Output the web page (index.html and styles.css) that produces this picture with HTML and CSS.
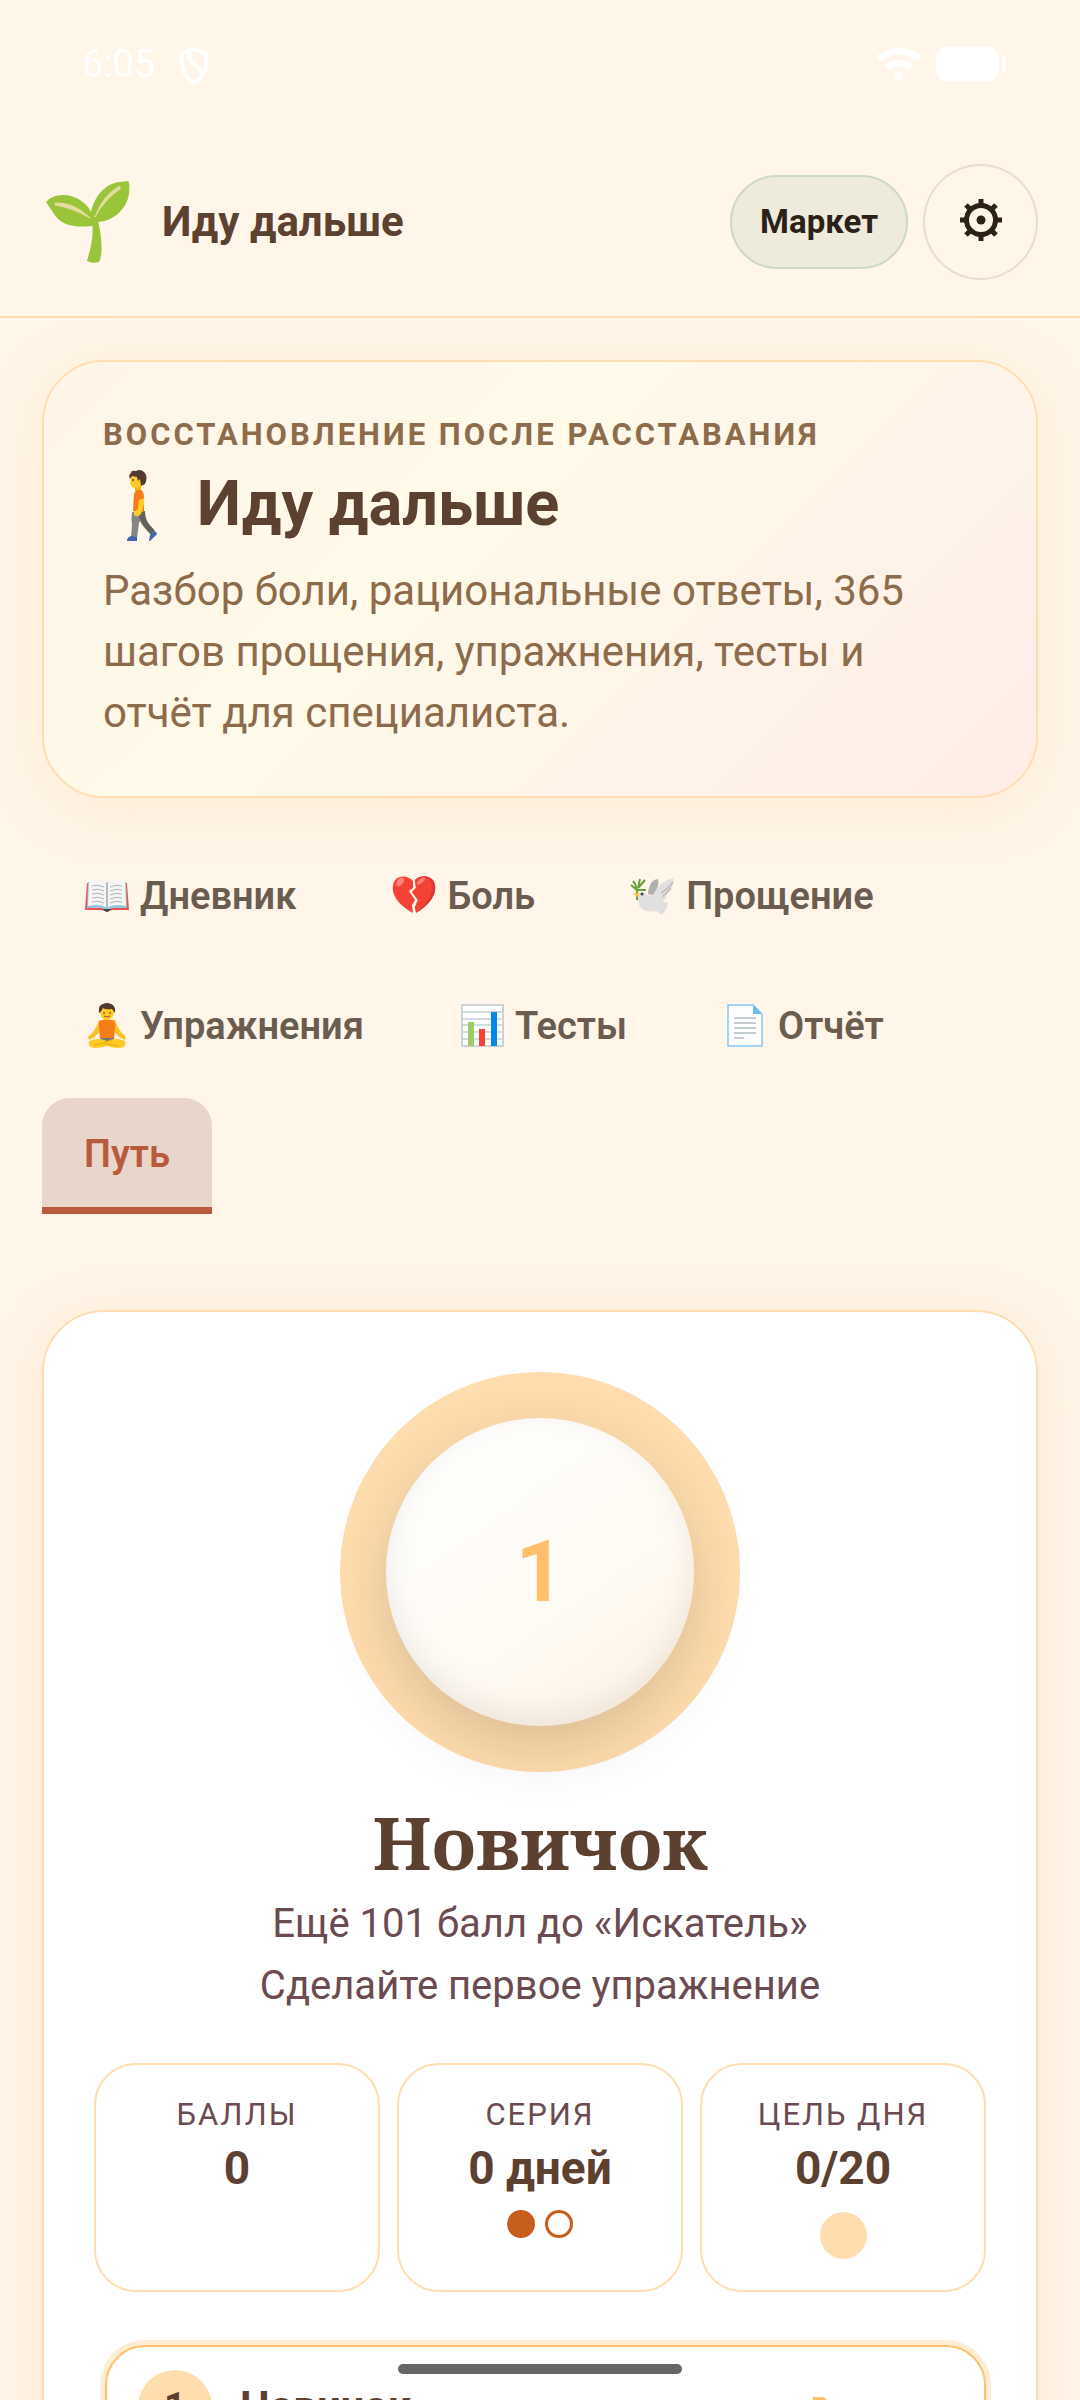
FILE: index.html
```
<!DOCTYPE html>
<html lang="ru">
<head>
    <meta charset="UTF-8">
    <meta name="viewport" content="width=device-width, initial-scale=1">
    <title>Иду дальше</title>
    <link rel="stylesheet" href="styles.css">
</head>
<body>
    <!-- Шапка со строкой состояния -->
    <header class="header">
        <div class="status-bar">
            <span class="clock">6:05</span>
            <svg class="status-shield" viewBox="0 0 30 38" fill="none" stroke="#fff" stroke-width="4" stroke-linejoin="round">
                <path d="M15 2 L27 6.500 C28.500 18 27 29 15 35.500 C3 29 1.500 18 3 6.500 Z"/>
                <path d="M10 4 C9 19 23 17 23 28"/>
            </svg>
            <span class="spacer"></span>
            <svg class="status-wifi" viewBox="0 0 44 36" fill="none" stroke="#fff" stroke-width="7" stroke-linecap="round">
                <path d="M4 11 Q22 -1 40 11"/>
                <path d="M12.500 20 Q22 14 31.500 20"/>
                <circle cx="22" cy="30" r="4" fill="#fff" stroke="none"/>
            </svg>
            <svg class="status-battery" viewBox="0 0 70 34" fill="#fff">
                <rect width="63" height="34" rx="11"/>
                <path d="M66 9 q4 0 4 4 v8 q0 4 -4 4z"/>
            </svg>
        </div>
        <div class="topbar">
            <svg class="logo" viewBox="0 0 84 82" aria-hidden="true">
                <path d="M46 40 C48 54 45 66 41 80 Q46 83 53 81 C57 74 56 56 52 40z" fill="#9ac43a"/>
                <path d="M46 45 C28 47 15 44 8 33 L0 21 Q6 14 17 14 C30 14 41 22 45 31 C49 14 60 2 74 1 L82 0 Q84 1 83 12 C82 26 68 41 51 41z" fill="#9ac43a"/>
                <path d="M9 22 Q28 21 44 37 Q27 27 9 24z M49 36 Q57 14 74 5 L74 8 Q58 19 49 36z" fill="#e6dc9c" stroke="#e6dc9c"/>
            </svg>
            <span class="brand">Иду дальше</span>
            <button type="button" class="btn-market">Маркет</button>
            <button type="button" class="btn-settings" aria-label="Настройки">
                <svg class="gear" viewBox="0 0 42 42" fill="none" stroke="#2c2117">
                    <circle cx="21" cy="21" r="14.500" stroke-width="5"/>
                    <circle cx="21" cy="21" r="4.500" fill="#2c2117" stroke="none"/>
                    <path stroke-width="5" d="M21 0V6M21 36V42M0 21H6M36 21H42M6 6L10 10M32 32L36 36M36 6L32 10M10 32L6 36"/>
                </svg>
            </button>
        </div>
    </header>

    <main class="content">
        <section class="hero">
            <p class="kicker">Восстановление после расставания</p>
            <h1 class="hero-title">
                <svg class="walker" viewBox="0 0 78 74" aria-hidden="true">
                    <path d="M29 45 Q28 52 29 58 L28 71 H34 L36 56 L41 46z" fill="#858585"/>
                    <path d="M36 45 Q36 55 41 60 L48 68 L52 64 L46 57 Q42 52 42 44z" fill="#616161"/>
                    <path d="M28 69 Q32 70 34 70 V74 H24 Q24 70 28 69z M47 68 Q51 66 51 64 L54 66 Q54 68 51 70 L47 74 H46z" fill="#3e65af"/>
                    <path d="M32 17 H38 V24 H32z" fill="#ffb300"/>
                    <path d="M31 27 Q33 22 38 23 Q41 24 41 31 L41 44 Q36 46 30 44z" fill="#f57c1b"/>
                    <path d="M36 33 L41 31 L41 37 L38 47 Q34 51 31 48 L31 45 L35 42z" fill="#ffca28"/>
                    <path d="M28 9 L38 10 L38 18 Q34 23 29 20 L27 16z" fill="#ffca28"/>
                    <path d="M27 12 Q25 8 28 6 Q28 3 33 4 Q38 1 42 6 Q45 11 42 17 L38 19 L37 12 L35 14 L34 10 L29 9z" fill="#543930"/>
                    <circle cx="30" cy="13" r="1" fill="#543930"/>
                </svg>
                Иду дальше
            </h1>
            <p class="hero-text">Разбор боли, рациональные ответы, 365 шагов прощения, упражнения, тесты и отчёт для специалиста.</p>
        </section>

        <!-- Вкладки -->
        <nav class="tabs">
            <button type="button" class="tab">
                <svg class="emoji" viewBox="0 0 46 46" aria-hidden="true">
                    <path d="M3 10 L1 37 H18 L23 39 L28 37 H45 L43 10z" fill="#ef5350"/>
                    <path d="M4 9 L3 35 H18 L23 38 L28 35 H43 L42 9z" fill="#8fc6da"/>
                    <path d="M5 8 Q17 5 23 10 Q29 5 41 8 L42 33 Q29 30 23 35 Q17 30 4 33z" fill="#f5f5f5"/>
                    <path d="M23 10 V35" stroke="#b0bec5" stroke-width="2"/>
                    <path d="M8 13 Q14 11 20 14 M8 17 Q14 15 20 18 M8 21 Q14 19 20 22 M8 25 Q14 23 20 26 M8 29 Q14 27 20 30 M26 14 Q32 11 38 13 M26 18 Q32 15 38 17 M26 22 Q32 19 38 21 M26 26 Q32 23 38 25 M26 30 Q32 27 38 29" fill="none" stroke="#b5b5b5"/>
                    <path d="M18 36 H28 L23 39z" fill="#37474f"/>
                </svg>
                Дневник
            </button>
            <button type="button" class="tab">
                <svg class="emoji" viewBox="0 0 46 46" aria-hidden="true">
                    <path d="M22 8 C16 1 4 2 2 12 C0 24 11 34 22 40 L21 32 L24 27 L18 18 L22 15z" fill="#f44336"/>
                    <path d="M24 7 C30 1 42 2 44 12 C46 24 35 34 25 40 L24 34 L27 27 L21 19 L25 15z" fill="#f44336"/>
                    <path d="M24 7 C30 1 42 2 44 12 C46 24 35 34 25 40 Q41 26 41 12 Q36 2 24 7z" fill="#d83a34"/>
                    <path d="M24 7 C30 2 40 3 41 13 C41 24 33 33 25 39 L24 34 L27 27 L21 19 L25 15z" fill="#f44336"/>
                    <ellipse cx="9" cy="9" rx="3" ry="5" transform="rotate(40 9 9)" fill="#ff847c"/>
                    <ellipse cx="30" cy="8" rx="2" ry="5" transform="rotate(50 30 8)" fill="#ff847c"/>
                </svg>
                Боль
            </button>
            <button type="button" class="tab">
                <svg class="emoji" viewBox="0 0 46 46" aria-hidden="true">
                    <path d="M3 8 Q8 13 7 27 M8 15 L10 6 M8 15 L15 7 M7 17 H16 M7 17 L1 12" fill="none" stroke="#689f38" stroke-width="2"/>
                    <path d="M18 21 Q19 7 28 6 Q30 13 23 22z" fill="#b0b0b0"/>
                    <path d="M8 25 Q7 18 14 19 Q18 24 24 22 Q27 10 43 5 Q45 13 37 20 Q37 25 33 29 L38 30 Q37 38 31 42 Q29 40 27 38 Q8 41 8 25z" fill="#e0e0e0"/>
                    <path d="M31 20 Q39 15 43 9 M32 24 Q38 19 41 15" fill="none" stroke="#bdbdbd" stroke-width="1.500"/>
                    <path d="M9 19 L3 21 L8 24z" fill="#fbc02d"/>
                    <circle cx="12" cy="21" r="1.500" fill="#424242"/>
                </svg>
                Прощение
            </button>
            <button type="button" class="tab">
                <svg class="emoji" viewBox="0 0 46 46" aria-hidden="true">
                    <path d="M15 17 Q11 29 4 34 L5 37 Q13 34 17 26 L29 26 Q33 34 41 37 L42 34 Q35 29 31 17z" fill="#ffc022"/>
                    <path d="M20 12 H26 V19 H20z" fill="#ffb300"/>
                    <path d="M19 17 H27 Q32 17 31 24 L30 36 H16 L15 24 Q14 17 19 17z" fill="#f57c1b"/>
                    <path d="M16 35 H30 L28 39 H18z" fill="#757575"/>
                    <path d="M5 38 Q14 34 23 38 Q32 34 41 38 Q43 45 35 45 Q29 45 23 43 Q17 45 11 45 Q3 45 5 38z" fill="#ffc928"/>
                    <path d="M10 42 Q20 41 28 37 M22 41 L35 43" stroke="#f2a600" fill="none"/>
                    <ellipse cx="23" cy="9" rx="7" ry="8" fill="#ffca28"/>
                    <path d="M15 10 Q14 2 19 1 Q23 -1 27 1 Q32 3 31 10 L28 6 Q21 7 19 5 Q18 8 15 10z" fill="#543930"/>
                    <path d="M19 10 H21 M25 10 H27" stroke="#543930"/>
                    <path d="M20 13 Q23 15 26 13" stroke="#8d5a2b" fill="none"/>
                </svg>
                Упражнения
            </button>
            <button type="button" class="tab">
                <svg class="emoji" viewBox="0 0 46 46" aria-hidden="true">
                    <path d="M3 2 H44 V43 H3z" fill="#fff" stroke="#b9c8d0" stroke-width="1.500"/>
                    <path d="M3 9 H44 M3 16 H44 M3 22 H44 M3 29 H44 M3 36 H44" stroke="#c3cfd6" stroke-width="1.500"/>
                    <path d="M9 19 H15 V43 H9z" fill="#9ccc65"/>
                    <path d="M20 26 H26 V43 H20z" fill="#f44336"/>
                    <path d="M32 9 H38 V43 H32z" fill="#0288e8"/>
                </svg>
                Тесты
            </button>
            <button type="button" class="tab">
                <svg class="emoji" viewBox="0 0 46 46" aria-hidden="true">
                    <path d="M6 2 H31 L40 11 V43 H6z" fill="#fff" stroke="#82c8f4" stroke-width="1.500"/>
                    <path d="M31 2 L40 11 H31z" fill="#6dbcf0"/>
                    <path d="M12 15 H34 M12 20 H34 M12 25 H34 M12 30 H34 M12 35 H22" stroke="#b0bec5" stroke-width="1.500"/>
                </svg>
                Отчёт
            </button>
            <button type="button" class="tab active">Путь</button>
        </nav>

        <!-- Карточка уровня -->
        <section class="progress">
            <div class="ring">
                <div class="ring-inner">1</div>
            </div>
            <h2 class="level-title">Новичок</h2>
            <p class="level-text">Ещё 101 балл до «Искатель»</p>
            <p class="level-text">Сделайте первое упражнение</p>

            <div class="stats">
                <div class="stat">
                    <span class="stat-label">Баллы</span>
                    <strong class="stat-value">0</strong>
                </div>
                <div class="stat">
                    <span class="stat-label">Серия</span>
                    <strong class="stat-value">0 дней</strong>
                    <div class="dots">
                        <span class="dot filled"></span>
                        <span class="dot"></span>
                    </div>
                </div>
                <div class="stat">
                    <span class="stat-label">Цель дня</span>
                    <strong class="stat-value">0/20</strong>
                    <span class="goal"></span>
                </div>
            </div>

            <ol class="levels">
                <li class="level current">
                    <span class="level-number">1</span>
                    <span class="level-name">Новичок</span>
                    <span class="level-state">В процессе</span>
                </li>
            </ol>
        </section>
    </main>

    <div class="home-indicator"></div>
</body>
</html>
```
FILE: styles.css
```
* {
    box-sizing: border-box;
}

body {
    margin: 0;
    height: 100vh;
    overflow: hidden;
    background-color: #fff5e8;
    color: #5c4030;
    font-family: Roboto, sans-serif;
}

h1, h2, p, ol {
    margin: 0;
    padding: 0;
}

button {
    font-family: inherit;
    cursor: pointer;
}

/* Шапка */
.header {
    border-bottom: 2px solid #ffddb0;
    padding-bottom: 36px;
}

.status-bar {
    display: flex;
    align-items: center;
    height: 128px;
    padding: 0 74px 0 82px;
    color: #fff;
}

.clock {
    font-size: 38px;
}

.status-shield {
    width: 30px;
    height: 38px;
    margin-left: 24px;
    margin-top: 3px;
}

.spacer {
    flex: 1;
}

.status-wifi {
    width: 44px;
    height: 36px;
    margin-right: 15px;
}

.status-battery {
    width: 70px;
    height: 34px;
}

.topbar {
    display: flex;
    align-items: center;
    margin-top: 36px;
    padding: 0 42px;
}

.logo {
    width: 84px;
    height: 82px;
    margin-left: 4px;
}

.brand {
    flex: 1;
    margin-left: 32px;
    padding-bottom: 2px;
    font-size: 42px;
    font-weight: 700;
}

.btn-market {
    height: 94px;
    padding: 0 28px 2px;
    border: 2px solid #cdd9c4;
    border-radius: 47px;
    background-color: #eeebdc;
    color: #2c2117;
    font-size: 33px;
    font-weight: 700;
}

.btn-settings {
    display: flex;
    align-items: center;
    justify-content: center;
    width: 115px;
    height: 116px;
    margin-left: 15px;
    padding: 0 0 4px;
    border: 2px solid #e6ddd3;
    border-radius: 50%;
    background: none;
}

.gear {
    width: 42px;
    height: 42px;
}

.content {
    padding: 42px;
}

/* Верхняя карточка */
.hero {
    padding: 53px 59px;
    border: 2px solid #ffddb0;
    border-radius: 62px;
    background: linear-gradient(135deg, #fff4e8 0%, #fffaea 40%, #ffede8 100%);
    box-shadow: 0 10px 60px rgba(255, 192, 105, 0.15);
}

.kicker {
    color: #8d6b4b;
    font-size: 31px;
    font-weight: 700;
    line-height: 40px;
    letter-spacing: 3px;
    text-transform: uppercase;
}

.hero-title {
    display: flex;
    align-items: center;
    gap: 16px;
    font-size: 63px;
    font-weight: 700;
    line-height: 98px;
}

.walker {
    width: 78px;
    height: 74px;
}

.hero-text {
    color: #8d6b4b;
    font-size: 42px;
    line-height: 61px;
    margin-top: 7px;
}

/* Вкладки */
.tabs {
    display: flex;
    flex-wrap: wrap;
    gap: 11px;
    margin-top: 40px;
}

.tab {
    display: flex;
    align-items: center;
    gap: 10px;
    height: 119px;
    padding: 3px 42px 0;
    border: none;
    border-bottom: 7px solid transparent;
    border-radius: 28px 28px 0 0;
    background: none;
    color: #6b5c50;
    font-size: 38px;
    font-weight: 600;
}

.tab.active {
    height: 116px;
    border-bottom-color: #b85a3c;
    background-color: #e9d5ca;
    color: #b85a3c;
}

.emoji {
    width: 46px;
    height: 46px;
}

/* Карточка уровня */
.progress {
    margin-top: 96px;
    padding: 60px 50px;
    border: 2px solid #ffddb0;
    border-radius: 62px;
    background-color: #fff;
    box-shadow: 0 10px 60px rgba(255, 160, 105, 0.14);
    text-align: center;
}

.ring {
    display: flex;
    align-items: center;
    justify-content: center;
    width: 400px;
    height: 400px;
    margin: 0 auto;
    border-radius: 50%;
    background-color: #ffddae;
}

.ring-inner {
    width: 308px;
    height: 308px;
    border-radius: 50%;
    background: linear-gradient(145deg, #fff 0%, #fffcf6 50%, #fff3e6 100%);
    box-shadow: 0 21px 63px rgba(0, 0, 0, 0.15), inset 0 -10px 32px rgba(0, 0, 0, 0.08);
    color: #ffc069;
    font-size: 85px;
    font-weight: 700;
    line-height: 308px;
}

.level-title {
    margin-top: 18px;
    font-family: "Noto Serif", "DejaVu Serif", serif;
    font-size: 73px;
    font-weight: 700;
    line-height: 103px;
}

.level-text {
    color: #6b4a50;
    font-size: 40px;
    line-height: 62px;
}

.stats {
    display: grid;
    grid-template-columns: repeat(3, 1fr);
    gap: 17px;
    margin-top: 46px;
}

.stat {
    display: flex;
    flex-direction: column;
    align-items: center;
    height: 229px;
    padding-top: 30px;
    border: 2px solid #ffddb0;
    border-radius: 42px;
}

.stat-label {
    color: #6b4a50;
    font-size: 31px;
    line-height: 40px;
    letter-spacing: 2px;
    text-transform: uppercase;
}

.stat-value {
    font-size: 46px;
    line-height: 66px;
}

.dots {
    display: flex;
    gap: 10px;
    margin-top: 9px;
}

.dot {
    width: 28px;
    height: 28px;
    border: 3px solid #c85e1e;
    border-radius: 50%;
}

.dot.filled {
    background-color: #c85e1e;
}

.goal {
    width: 47px;
    height: 47px;
    margin-top: 11px;
    border-radius: 50%;
    background-color: #ffddae;
}

/* Список уровней */
.levels {
    margin-top: 53px;
    padding-left: 11px;
    list-style: none;
}

.level {
    display: flex;
    align-items: center;
    padding: 23px 24px 23px 31px;
    border: 2px solid #ffc069;
    border-radius: 40px;
    box-shadow: 0 0 0 5px #ffedd5;
}

.level-number {
    width: 74px;
    height: 74px;
    border-radius: 50%;
    background-color: #ffddae;
    font-size: 38px;
    font-weight: 700;
    line-height: 74px;
}

.level-name {
    flex: 1;
    margin-left: 28px;
    font-size: 42px;
    font-weight: 700;
    line-height: 74px;
    text-align: left;
}

.level-state {
    color: #ffc069;
    font-size: 28px;
    font-weight: 700;
}

/* Полоска жестов поверх страницы */
.home-indicator {
    position: fixed;
    bottom: 26px;
    left: 50%;
    width: 284px;
    height: 10px;
    border-radius: 5px;
    background-color: #666;
    transform: translateX(-50%);
}
```
